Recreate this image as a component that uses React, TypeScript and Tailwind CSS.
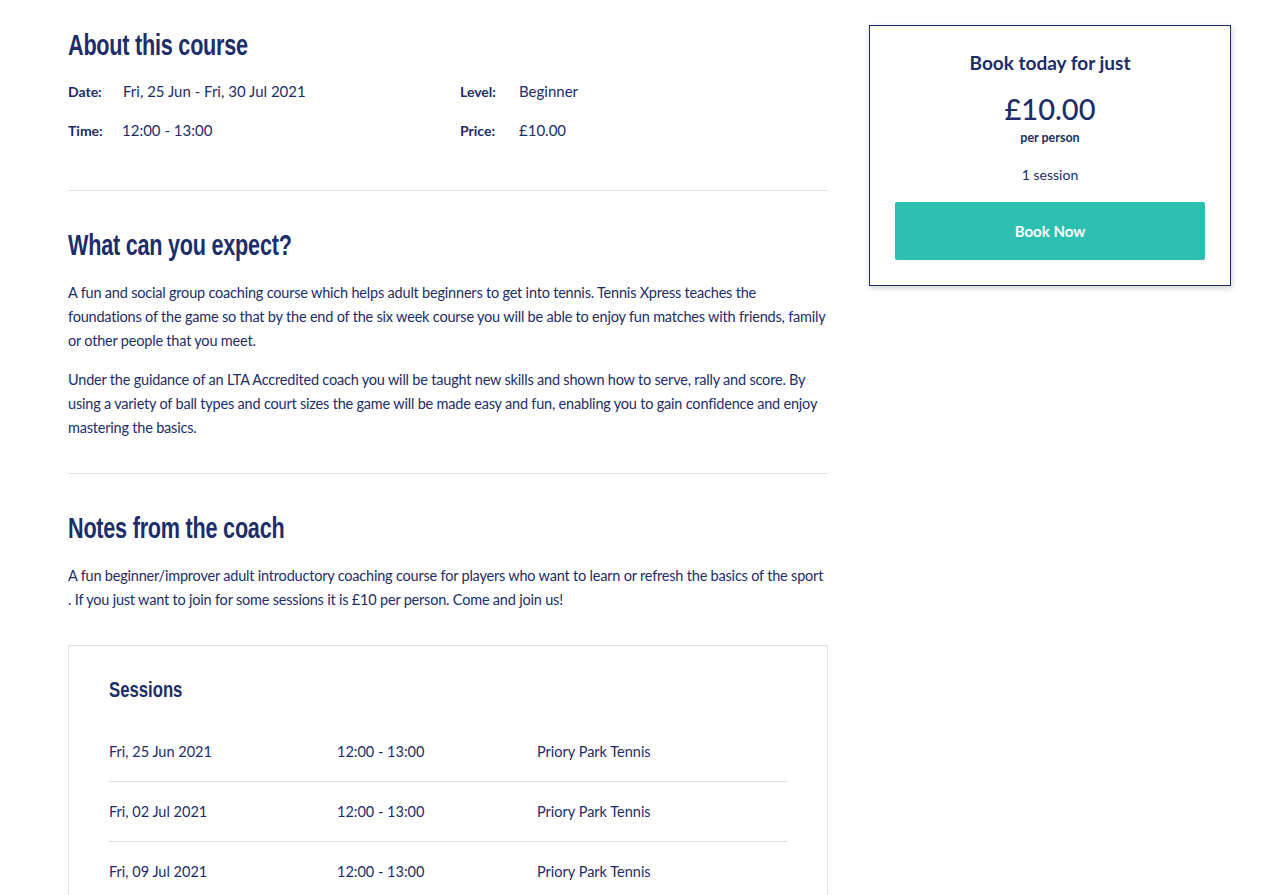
const navy = "text-[#1b2d6b]";

const sessions = [
  { date: "Fri, 25 Jun 2021", time: "12:00 - 13:00", place: "Priory Park Tennis" },
  { date: "Fri, 02 Jul 2021", time: "12:00 - 13:00", place: "Priory Park Tennis" },
  { date: "Fri, 09 Jul 2021", time: "12:00 - 13:00", place: "Priory Park Tennis" },
];

const condensed = { fontFamily: '"Liberation Sans", Arial, sans-serif' };

function Heading({ children }: { children: React.ReactNode }) {
  return (
    <h2 className={`${navy} text-[29px] leading-[34px] font-bold tracking-[-0.3px] whitespace-nowrap`} style={condensed}>
      <span className="inline-block origin-left scale-x-[0.745]">{children}</span>
    </h2>
  );
}

function Detail({ label, value, labelW }: { label: string; value: string; labelW: string }) {
  return (
    <div className="flex items-center h-[24px]">
      <span className={`${labelW} font-bold text-[14px]`}>{label}</span>
      <span className="text-[15px]">{value}</span>
    </div>
  );
}

export default function App() {
  return (
    <div
      className={`min-h-[895px] bg-white ${navy} flex items-start pl-[68px]`}
      style={{ fontFamily: 'Lato, "Open Sans", sans-serif' }}
    >
      <div className="w-[760px] pt-[28px]">
        {/* about */}
        <Heading>About this course</Heading>
        <div className="grid grid-cols-[392px_1fr] mt-[17px] gap-y-[15px]">
          <Detail label="Date:" value="Fri, 25 Jun - Fri, 30 Jul 2021" labelW="w-[55px]" />
          <Detail label="Level:" value="Beginner" labelW="w-[59px]" />
          <Detail label="Time:" value="12:00 - 13:00" labelW="w-[54px]" />
          <Detail label="Price:" value="£10.00" labelW="w-[59px]" />
        </div>
        <hr className="mt-[48px] border-0 h-px bg-[#e3e3e3]" />

        <div className="mt-[37px]">
          <Heading>What can you expect?</Heading>
        </div>
        <div className="mt-[19px] text-[14.5px] leading-[24px] space-y-[15px] tracking-[-0.2px]">
          <p>
            A fun and social group coaching course which helps adult beginners to get into tennis. Tennis Xpress teaches the
            foundations of the game so that by the end of the six week course you will be able to enjoy fun matches with friends, family
            or other people that you meet.
          </p>
          <p>
            Under the guidance of an LTA Accredited coach you will be taught new skills and shown how to serve, rally and score. By
            using a variety of ball types and court sizes the game will be made easy and fun, enabling you to gain confidence and enjoy
            mastering the basics.
          </p>
        </div>
        <hr className="mt-[33px] border-0 h-px bg-[#e3e3e3]" />

        <div className="mt-[37px]">
          <Heading>Notes from the coach</Heading>
        </div>
        <p className="mt-[19px] text-[14.5px] leading-[24px] tracking-[-0.2px]">
          A fun beginner/improver adult introductory coaching course for players who want to learn or refresh the basics of the sport
          . If you just want to join for some sessions it is £10 per person. Come and join us!
        </p>

        <div className="mt-[33px] border border-[#dedede] px-[40px] pt-[30px]">
          <h3 className="text-[22px] leading-[28px] font-bold whitespace-nowrap" style={condensed}>
            <span className="inline-block origin-left scale-x-[0.76]">Sessions</span>
          </h3>
          <div className="mt-[18px]">
            {sessions.map((s, i) => (
              <div
                key={i}
                className={`flex items-center h-[60px] text-[14.5px] ${i < sessions.length - 1 ? "border-b border-[#dedede]" : ""}`}
              >
                <span className="w-[228px]">{s.date}</span>
                <span className="w-[200px]">{s.time}</span>
                <span>{s.place}</span>
              </div>
            ))}
          </div>
        </div>
      </div>

      <div className="ml-[41px] mt-[25px] w-[362px] border border-[#1b2d6b] shadow-[1px_2px_6px_rgba(0,0,0,0.2)] px-[25px] pt-[25px] pb-[25px] text-center">
        <div className="text-[19px] font-bold leading-[24px]">Book today for just</div>
        <div className="mt-[18px] text-[29px] leading-[32px] font-medium">£10.00</div>
        <div className="text-[12.5px] font-bold leading-[16px] mt-[5px]">per person</div>
        <div className="text-[14px] leading-[20px] mt-[19px]">1 session</div>
        <button className="mt-[17px] w-full h-[58px] bg-[#2dbfb0] rounded-[2px] text-white text-[15px] font-bold">
          Book Now
        </button>
      </div>
    </div>
  );
}
